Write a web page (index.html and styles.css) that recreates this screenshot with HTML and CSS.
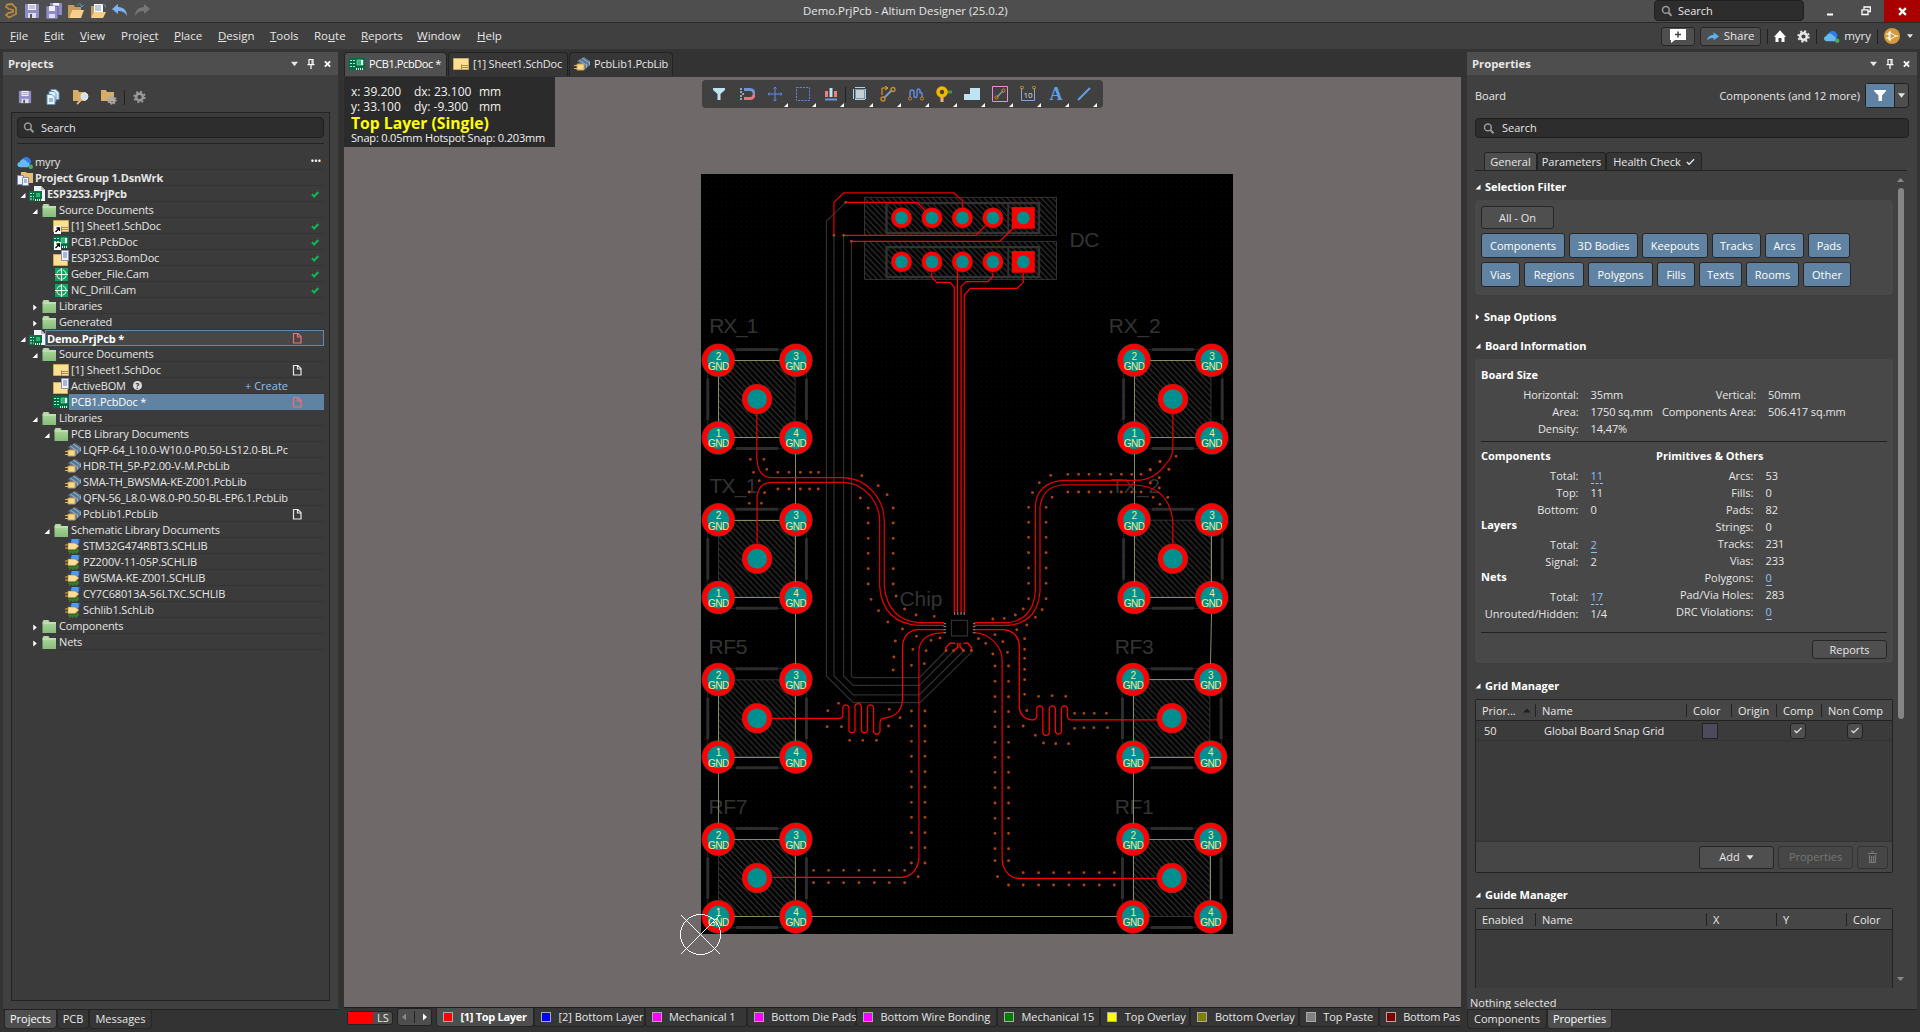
FILE: index.html
```html
<!DOCTYPE html>
<html lang="en">
<head>
<meta charset="utf-8">
<title>Demo.PrjPcb - Altium Designer (25.0.2)</title>
<link rel="stylesheet" href="styles.css">
</head>
<body>
<svg class="defs" width="0" height="0">
  <defs>
    <linearGradient id="gFolder" x1="0" y1="0" x2="0" y2="1"><stop offset="0" stop-color="#b5dba5"/><stop offset="1" stop-color="#84bb78"/></linearGradient>
    <pattern id="hatch" width="5.7" height="6" patternUnits="userSpaceOnUse"><path d="M-1 -1.05L6.7 7.05M-1 4.95L1 7.05M4.7 -1.05L6.7 1.05" stroke="#383838" stroke-width="1"/></pattern>
    <pattern id="dots" width="5" height="5" patternUnits="userSpaceOnUse"><rect x="1" y="1" width="1" height="1" fill="#0c0c0c"/></pattern>
    <symbol id="save" viewBox="0 0 16 16"><path d="M1 1h14v14H1z" fill="#8f8cc6"/><path d="M4 1h8v6H4z" fill="#efefff"/><path d="M5 3h6M5 5h6" stroke="#9a98b8"/><path d="M4 10h8v5H4z" fill="#dcdcf0"/><path d="M6 11h2v4H6z" fill="#555"/></symbol>
    <symbol id="saveall" viewBox="0 0 16 16"><path d="M4 0h12v12H4z" fill="#8f8cc6"/><path d="M7 0h6v3H7z" fill="#efefff"/><path d="M0 3h12v13H0z" fill="#8f8cc6" stroke="#454565" stroke-width=".6"/><path d="M3 3h6v5H3z" fill="#efefff"/><path d="M3 11h6v4H3z" fill="#dcdcf0"/></symbol>
    <symbol id="open" viewBox="0 0 16 16"><path d="M0 2h6l1 2h6v3H4L1 15H0z" fill="#c89d58"/><path d="M4 7h12l-3 8H1z" fill="#f4cf8c"/><path d="M9 3c1-3 5-3 5 0M12 2l2 2 2-2" stroke="#4a90b8" fill="none"/></symbol>
    <symbol id="opendoc" viewBox="0 0 16 16"><path d="M1 3h5v11H1z" fill="#c89d58"/><path d="M4 1h9v9H4z" fill="#fff"/><path d="M5 3h6M5 5h6M5 7h6" stroke="#7b93b5"/><path d="M4 9h12l-3 6H1z" fill="#f4cf8c"/><path d="M12 1l3 1 1 3" stroke="#4a90b8" fill="none"/></symbol>
    <symbol id="mag" viewBox="0 0 16 16"><circle cx="6.5" cy="6.5" r="4.500" fill="none" stroke="#9a9a9a" stroke-width="2"/><path d="M10 10l4 4.500" stroke="#9a9a9a" stroke-width="2.600"/></symbol>
    <symbol id="folder" viewBox="0 0 16 16"><path d="M1.500 4l1-2h5l1 2H15v11H1.500z" fill="url(#gFolder)"/><path d="M1.500 5h13.500" stroke="#d9f0cf" stroke-width=".8"/></symbol>
    <symbol id="sch" viewBox="0 0 16 16"><path d="M.5 2.500h15v11H.5z" fill="#fbdf94" stroke="#d2a75c"/><path d="M9 9.500h6M9 11.500h6M8.500 8.500v5" stroke="#a8894a" fill="none"/></symbol>
    <symbol id="pcb" viewBox="0 0 16 16"><path d="M0 2h16v12H0z" fill="#006d45"/><path d="M1 4.500h5M1 7.500h5M1 10.500h5" stroke="#a9e8c6" stroke-dasharray="2 1"/><path d="M8 4h6v5H8z" fill="#2bb673" stroke="#8fe0b7" stroke-width=".6"/><path d="M12 4h2v5h-2z" fill="#e8fff2"/><path d="M7 13h8" stroke="#d2f7e0" stroke-width="2" stroke-dasharray="1 1"/></symbol>
    <symbol id="link" viewBox="0 0 16 16"><path d="M1 8h7v8H1z" fill="#fff"/><path d="M2.500 14L6 10.500M3.500 10h3v3" stroke="#000" fill="none" stroke-width="1.300"/></symbol>
    <symbol id="prj" viewBox="0 0 16 16"><path d="M5 0h7l4 4v11H5z" fill="#f2f2f7"/><path d="M12 0v4h4" fill="#b5b5c5"/><path d="M0 5h13v10H0z" fill="#0a7045"/><path d="M1 7.500h4M1 10.500h4M1 13h4" stroke="#a9e8c6" stroke-dasharray="2 1"/><path d="M7 7h4v4H7z" fill="#2bb673"/><path d="M6 14h7" stroke="#d2f7e0" stroke-width="2" stroke-dasharray="1 1"/></symbol>
    <symbol id="bom" viewBox="0 0 16 16"><path d="M.5 4.500h14v11H.5z" fill="#fbdf94" stroke="#d2a75c"/><path d="M8.500.5h7v10h-7z" fill="#eef3ff" stroke="#8494b8"/><path d="M10 3h4M10 5h4M10 7h4" stroke="#6478a5"/></symbol>
    <symbol id="cam" viewBox="0 0 16 16"><path d="M2 2h13v13H2z" fill="#0fa35d"/><circle cx="8.500" cy="8.500" r="4.800" fill="none" stroke="#d5ffe6" stroke-dasharray="5.540 2" stroke-dashoffset="-1"/><path d="M8.500 2v13M2 8.500h13" stroke="#eafff2" stroke-width="1.200"/></symbol>
    <symbol id="group" viewBox="0 0 16 16"><path d="M4 2h5l1 1h6v10H4z" fill="#e8bd74"/><path d="M.5 5.500h6v9h-6z" fill="#eef3ff" stroke="#7b8caf"/><path d="M5.500 7.500h6v8h-6z" fill="#eef3ff" stroke="#7b8caf"/><path d="M7 10h3M7 12h3" stroke="#6478a5"/></symbol>
    <symbol id="cloud" viewBox="0 0 18 16"><path d="M5 11c-2-7 5-11 9-7 2 2 2 3 1.500 5l-2 3z" fill="#2f7be8"/><path d="M4 14c-4 0-5-5-1-6 1-4 7-4 8 0 4 0 4 6 0 6z" fill="#66baf2"/><circle cx="15.500" cy="13.300" r="2.500" fill="#45b35e"/></symbol>
    <symbol id="plib" viewBox="0 0 16 16"><path d="M3 5l7-4 6 4-7 5z" fill="#5b7590"/><path d="M5 4l6 4M8 2l6 4" stroke="#a8c4d8" stroke-width=".8"/><path d="M9 10l7-5v4l-6 5z" fill="#8fb0c8"/><path d="M11 9v4M14 7v4" stroke="#32485c"/><path d="M3 8h7v6H3z" fill="#f9d98a" stroke="#c79c4f"/><path d="M0 9.500h3M0 12.500h3" stroke="#d9ae5e"/></symbol>
    <symbol id="slib" viewBox="0 0 16 16"><path d="M4 11h9v3H4zM5 14v2M8 14v2M11 14v2" fill="#2d6b2b" stroke="#3b8a35"/><path d="M6 1h7l2 1-2 5H6z" fill="#4f9bf0"/><path d="M4 2h3M13 3h3" stroke="#1546a5"/><path d="M3 5h7l4 3-4 3.500H3z" fill="#ffdd93" stroke="#a37d3a" stroke-width=".6"/><path d="M0 7h3M0 10h3" stroke="#e0a94c"/></symbol>
    <symbol id="tick" viewBox="0 0 10 10"><path d="M2 5.200l2.200 2.300L8.300 3" stroke="#0fb552" stroke-width="2.200" fill="none"/></symbol>
    <symbol id="doc" viewBox="0 0 10 12"><path d="M1.500 1.500h4.500l3 3v6.500h-7.500zM5.500 1.500v3.500h3.500" fill="none" stroke="currentColor" stroke-width="1.200"/></symbol>
    <symbol id="dn" viewBox="0 0 8 8"><path d="M0 1.500h8l-4 5z" fill="currentColor"/></symbol>
    <symbol id="pin" viewBox="0 0 8 10"><path d="M2 .5v5h4v-5zM.5 5.700h7M4 6v4" stroke="#fff" stroke-width="1.200" fill="none"/><path d="M5 1v4" stroke="#fff"/></symbol>
    <symbol id="x" viewBox="0 0 8 8"><path d="M1 1l6 6M7 1l-6 6" stroke="#fff" stroke-width="2"/></symbol>
    <symbol id="exp" viewBox="0 0 6 6"><path d="M5.500 .5v5h-5z" fill="#fff"/></symbol>
    <symbol id="col" viewBox="0 0 6 8"><path d="M1 .5l4 3.500-4 3.500z" fill="#fff"/></symbol>
    <symbol id="gear" viewBox="0 0 16 16"><circle cx="8" cy="8" r="4.200" fill="none" stroke="currentColor" stroke-width="3.200"/><circle cx="8" cy="8" r="6.600" fill="none" stroke="currentColor" stroke-width="2" stroke-dasharray="2.600 2.580"/></symbol>
    <symbol id="chk" viewBox="0 0 10 8"><path d="M1 4l2.500 2.500L9 1" fill="none" stroke="#e8e8e8" stroke-width="1.500"/></symbol>
    <g id="gnd"><circle r="16.800" fill="#3c3c3c"/><circle r="16.200" fill="#f00"/><circle r="11" fill="#008f8f"/></g>
    <g id="sma">
      <path d="M-49.500 -49.700H49.500V49.700H-49.500z" fill="none" stroke="#222"/>
      <path d="M-21 -49.500H21M-21 49.500H21M-49.300 -20.500V21M49.300 -20.500V21" stroke="#2d2d2d" stroke-width="3" fill="none"/>
      <path d="M-38.500 -38.500H38V38.500H-38.500z" fill="url(#hatch)" stroke="#333"/>
      <circle r="15.300" fill="#3c3c3c"/><circle r="14.800" fill="#f00"/><circle r="9.900" fill="#008f8f"/>
      <use href="#gnd" x="-38.800" y="-38.800"/><use href="#gnd" x="38.800" y="-38.800"/><use href="#gnd" x="-38.800" y="38.800"/><use href="#gnd" x="38.800" y="38.800"/>
      <g class="padtext">
        <text x="-38.800" y="-39.500">2</text><text x="-38.800" y="-29.200">GND</text>
        <text x="38.800" y="-39.500">3</text><text x="38.800" y="-29.200">GND</text>
        <text x="-38.800" y="38.100">1</text><text x="-38.800" y="48.400">GND</text>
        <text x="38.800" y="38.100">4</text><text x="38.800" y="48.400">GND</text>
      </g>
    </g>
    <g id="hp"><circle r="10.600" fill="#4a2020"/><circle r="10.200" fill="#f00"/><circle r="6.400" fill="#008f8f"/></g>
    <g id="hs"><path d="M-11.500 -10.800h23v21.600h-23z" fill="#f00"/><circle r="6.400" fill="#008f8f"/></g>
    <g id="hdr">
      <path d="M864.500 -20.500H1056.500V17.500H864.500z" fill="url(#hatch)" stroke="#333"/>
      <path d="M886.500 -14.800H1039V15H886.500z" fill="none" stroke="#333" stroke-width="2.400"/><path d="M1008.200 -15V15" stroke="#333" stroke-width="1.800"/>
      <use href="#hp" x="901.500"/><use href="#hp" x="932"/><use href="#hp" x="962.400"/><use href="#hp" x="992.900"/><use href="#hs" x="1023.300"/>
    </g>
  </defs>
</svg>

<div class="app">
  <header class="titlebar">
    <div class="quick">
      <svg width="14" height="16" viewBox="0 0 14 16"><path d="M3 1.500l5-.5 4 4v6l-7 3.500L2 12l2-2 5-1V7L5 6 2 4z" fill="none" stroke="#b5893f" stroke-width="1.800"/></svg>
      <svg class="i"><use href="#save"/></svg><svg class="i"><use href="#saveall"/></svg><svg class="i"><use href="#open"/></svg><svg class="i"><use href="#opendoc"/></svg>
      <svg class="i" viewBox="0 0 16 16"><path d="M0 6l6-5v3c6 0 9 4 9 9-2-4-5-5-9-5v3z" fill="#7fb2f0"/></svg>
      <svg class="i" viewBox="0 0 16 16"><path d="M16 6l-6-5v3C4 4 1 8 1 13c2-4 5-5 9-5v3z" fill="#757575"/></svg>
    </div>
    <div class="apptitle">Demo.PrjPcb - Altium Designer (25.0.2)</div>
    <div class="topright">
      <div class="searchbox top"><svg width="12" height="12"><use href="#mag"/></svg><span>Search</span></div>
      <div class="wbtn"><svg width="8" height="10"><path d="M1 8.500h6" stroke="#fff" stroke-width="2"/></svg></div>
      <div class="wbtn"><svg width="10" height="10" viewBox="0 0 10 10"><path d="M3 3V1h6.300v4.500H7M1 3.800h6v4.700H1z" fill="none" stroke="#fff" stroke-width="1.300"/></svg></div>
      <div class="wbtn close"><svg width="9" height="9"><use href="#x" width="9" height="9"/></svg></div>
    </div>
  </header>
  <nav class="menubar">
    <div class="menus"><span style="width:34px"><u>F</u>ile</span><span style="width:36px"><u>E</u>dit</span><span style="width:41px"><u>V</u>iew</span><span style="width:53px">Proje<u>c</u>t</span><span style="width:44px"><u>P</u>lace</span><span style="width:52px"><u>D</u>esign</span><span style="width:44px"><u>T</u>ools</span><span style="width:47px">Ro<u>u</u>te</span><span style="width:56px"><u>R</u>eports</span><span style="width:60px"><u>W</u>indow</span><span><u>H</u>elp</span></div>
    <div class="account">
      <div class="btn cmt"><svg width="18" height="14" viewBox="0 0 18 14"><path d="M1 0h16v11H6l-4 3v-3H1z" fill="#fff"/><path d="M9 2.500v6M6 5.500h6" stroke="#444" stroke-width="1.500"/></svg></div>
      <div class="btn share"><svg width="12" height="9" viewBox="0 0 12 9"><path d="M0 8.500c1-4 3-5.500 6.500-5.500V.3L12 4.500 6.500 8.300V6C4 6 2 6.500 0 8.500z" fill="#5fb0f0"/></svg><span>Share</span></div>
      <i class="vs"></i>
      <svg width="12" height="12" viewBox="0 0 12 12"><path d="M6 .3L12 7h-1.500v5H7.500V8h-3v4h-3V7H0z" fill="#fff"/></svg>
      <svg class="sgear" width="13" height="13"><use href="#gear"/></svg>
      <i class="vs"></i>
      <svg class="cl" width="17" height="14"><use href="#cloud"/></svg><span class="user">myry</span>
      <i class="vs"></i>
      <svg width="16" height="16" viewBox="0 0 16 16"><circle cx="8" cy="8" r="8" fill="#d59a3a"/><path d="M5 4l7 4-7 4zM2 6h4M2 10h4M6 3v10M12 8h2" fill="none" stroke="#fff"/></svg>
      <svg class="dd" width="6" height="6"><use href="#dn"/></svg>
    </div>
  </nav>

  <main class="work">
    <aside class="left">
      <div class="phead"><b>Projects</b><span class="pctl"><svg width="7" height="8"><use href="#dn"/></svg><svg width="8" height="10"><use href="#pin"/></svg><svg width="7" height="8"><use href="#x"/></svg></span></div>
      <div class="ptools">
        <svg class="i"><use href="#save" x="1" y="1" width="14" height="14"/></svg>
        <svg class="i" viewBox="0 0 16 16"><path d="M6 .5h5l3 3v7H6z" fill="#dff0fa" stroke="#5f93b8"/><path d="M4 2.500h5l2 2v8H4z" fill="#dff0fa" stroke="#5f93b8"/><path d="M2 5.500h5l3 3v7H2z" fill="#e8f6ff" stroke="#5f93b8"/><path d="M4 10h4M4 12h4" stroke="#4a80a8"/></svg>
        <svg class="i" viewBox="0 0 16 16"><path d="M0 1h5l1 2h7v9H0z" fill="#d8ad6a"/><circle cx="11.500" cy="7.500" r="3.500" fill="#cfe4f0" stroke="#eee"/><path d="M9 10l-5 5" stroke="#e0b878" stroke-width="1.800"/></svg>
        <svg class="i" viewBox="0 0 16 16"><path d="M0 1h5l1 2h7v9H0z" fill="#d8ad6a"/><g style="color:#a9a9a9"><use href="#gear" x="6" y="6" width="10" height="10"/></g></svg>
        <i class="vs"></i>
        <svg class="grey" width="13" height="14"><use href="#gear"/></svg>
      </div>
      <div class="pbox">
        <div class="searchbox"><svg width="12" height="13"><use href="#mag"/></svg><span>Search</span></div>
        <div class="hr"></div>
        <div class="tree">
          <div class="row d0"><svg class="i"><use href="#cloud"/></svg><div class="t">myry<em class="dots">•••</em></div></div>
          <div class="row d0 b"><svg class="i"><use href="#group"/></svg><div class="t">Project Group 1.DsnWrk</div></div>
          <div class="row d1 b"><svg class="a"><use href="#exp"/></svg><svg class="i"><use href="#prj"/></svg><div class="t">ESP32S3.PrjPcb<svg class="ck"><use href="#tick"/></svg></div></div>
          <div class="row d2"><svg class="a"><use href="#exp"/></svg><svg class="i"><use href="#folder"/></svg><div class="t">Source Documents</div></div>
          <div class="row d3"><svg class="i"><use href="#sch"/><use href="#link"/></svg><div class="t">[1] Sheet1.SchDoc<svg class="ck"><use href="#tick"/></svg></div></div>
          <div class="row d3"><svg class="i"><use href="#pcb"/><use href="#link"/></svg><div class="t">PCB1.PcbDoc<svg class="ck"><use href="#tick"/></svg></div></div>
          <div class="row d3"><svg class="i"><use href="#bom"/></svg><div class="t">ESP32S3.BomDoc<svg class="ck"><use href="#tick"/></svg></div></div>
          <div class="row d3"><svg class="i"><use href="#cam"/></svg><div class="t">Geber_File.Cam<svg class="ck"><use href="#tick"/></svg></div></div>
          <div class="row d3"><svg class="i"><use href="#cam"/></svg><div class="t">NC_Drill.Cam<svg class="ck"><use href="#tick"/></svg></div></div>
          <div class="row d2"><svg class="a"><use href="#col"/></svg><svg class="i"><use href="#folder"/></svg><div class="t">Libraries</div></div>
          <div class="row d2"><svg class="a"><use href="#col"/></svg><svg class="i"><use href="#folder"/></svg><div class="t">Generated</div></div>
          <div class="row d1 b cur"><svg class="a"><use href="#exp"/></svg><svg class="i"><use href="#prj"/></svg><div class="t">Demo.PrjPcb *<svg class="dc red"><use href="#doc"/></svg></div></div>
          <div class="row d2"><svg class="a"><use href="#exp"/></svg><svg class="i"><use href="#folder"/></svg><div class="t">Source Documents</div></div>
          <div class="row d3"><svg class="i"><use href="#sch"/></svg><div class="t">[1] Sheet1.SchDoc<svg class="dc"><use href="#doc"/></svg></div></div>
          <div class="row d3"><svg class="i"><use href="#bom"/></svg><div class="t">ActiveBOM<span class="q">?</span><em class="create">+ Create</em></div></div>
          <div class="row d3 sel"><svg class="i"><use href="#pcb"/></svg><div class="t">PCB1.PcbDoc *<svg class="dc red"><use href="#doc"/></svg></div></div>
          <div class="row d2"><svg class="a"><use href="#exp"/></svg><svg class="i"><use href="#folder"/></svg><div class="t">Libraries</div></div>
          <div class="row d3"><svg class="a"><use href="#exp"/></svg><svg class="i"><use href="#folder"/></svg><div class="t">PCB Library Documents</div></div>
          <div class="row d4"><svg class="i"><use href="#plib"/></svg><div class="t">LQFP-64_L10.0-W10.0-P0.50-LS12.0-BL.Pc</div></div>
          <div class="row d4"><svg class="i"><use href="#plib"/></svg><div class="t">HDR-TH_5P-P2.00-V-M.PcbLib</div></div>
          <div class="row d4"><svg class="i"><use href="#plib"/></svg><div class="t">SMA-TH_BWSMA-KE-Z001.PcbLib</div></div>
          <div class="row d4"><svg class="i"><use href="#plib"/></svg><div class="t">QFN-56_L8.0-W8.0-P0.50-BL-EP6.1.PcbLib</div></div>
          <div class="row d4"><svg class="i"><use href="#plib"/></svg><div class="t">PcbLib1.PcbLib<svg class="dc"><use href="#doc"/></svg></div></div>
          <div class="row d3"><svg class="a"><use href="#exp"/></svg><svg class="i"><use href="#folder"/></svg><div class="t">Schematic Library Documents</div></div>
          <div class="row d4"><svg class="i"><use href="#slib"/></svg><div class="t">STM32G474RBT3.SCHLIB</div></div>
          <div class="row d4"><svg class="i"><use href="#slib"/></svg><div class="t">PZ200V-11-05P.SCHLIB</div></div>
          <div class="row d4"><svg class="i"><use href="#slib"/></svg><div class="t">BWSMA-KE-Z001.SCHLIB</div></div>
          <div class="row d4"><svg class="i"><use href="#slib"/></svg><div class="t">CY7C68013A-56LTXC.SCHLIB</div></div>
          <div class="row d4"><svg class="i"><use href="#slib"/></svg><div class="t">Schlib1.SchLib</div></div>
          <div class="row d2"><svg class="a"><use href="#col"/></svg><svg class="i"><use href="#folder"/></svg><div class="t">Components</div></div>
          <div class="row d2"><svg class="a"><use href="#col"/></svg><svg class="i"><use href="#folder"/></svg><div class="t">Nets</div></div>
        </div>
      </div>
      <div class="ptabs"><span class="on" style="width:53px">Projects</span><span style="width:32px">PCB</span><span style="width:63px">Messages</span></div>
    </aside>

    <section class="center">
      <div class="dtabs">
        <span class="on" style="width:103px"><svg class="i"><use href="#pcb"/></svg>PCB1.PcbDoc *</span>
        <span style="width:120px"><svg class="i"><use href="#sch"/></svg>[1] Sheet1.SchDoc</span>
        <span style="width:104px"><svg class="i"><use href="#plib"/></svg>PcbLib1.PcbLib</span>
      </div>
      <div class="canvas">
        <svg class="board" width="1117" height="930" viewBox="344 77 1117 930">
          <path d="M701 174H1233V934H701z" fill="#000"/><path d="M701 174H1233V934H701z" fill="url(#dots)"/>
          <g class="ref">
            <text x="709.300" y="333" textLength="49">RX_1</text><text x="1108.800" y="333" textLength="52">RX_2</text><text x="1069.400" y="247" textLength="30">DC</text>
            <text x="709.500" y="493" textLength="48">TX_1</text><text x="1111" y="493" textLength="49">TX_2</text><text x="899.500" y="606" textLength="43">Chip</text>
            <text x="708.500" y="654" textLength="39">RF5</text><text x="1114.700" y="654" textLength="39">RF3</text><text x="708.500" y="814" textLength="39">RF7</text><text x="1114.700" y="814" textLength="39">RF1</text>
          </g>
          <g transform="translate(690 170) scale(.35714 .33333)" class="trk dim"><path d="M436 97L382 154V870M403 196V870M430 196V870M452 214V870"/></g>
          <g transform="translate(690 460) scale(.35714 .33333)" class="trk dim"><path d="M382 0V648L457 728H644L788 577M403 0V648L457 705H642L766 573M430 0V648L457 676H642L738 573M452 0V648L457 653H642L716 573"/><path d="M732 481H777V528H732z"/></g>
          <use href="#hdr" y="217.900"/><use href="#hdr" y="261.900"/>
          <use href="#sma" x="757.100" y="399.100"/><use href="#sma" x="1172.900" y="399.100"/>
          <use href="#sma" x="757.100" y="558.700"/><use href="#sma" x="1172.900" y="558.700"/>
          <use href="#sma" x="757.100" y="718.300"/><use href="#sma" x="1171.800" y="718.300"/>
          <use href="#sma" x="757.100" y="878"/><use href="#sma" x="1171.800" y="878"/>
          <path class="rat" d="M734.500 360.500H779.500M734.500 437.500H779.500M718.500 376.500V421.500M795.500 454V504M734.500 520.500H779.500M795.500 536V582M734.500 597.500H779.500M795.500 614V664M718.500 696V741M795.500 696V741M734.500 757.500H779.500M718.500 773.500V823.500M734.500 839.500H779.500M795.500 856V900M734.500 916.500H779.500M811.500 916.500H1117M1149.500 839.500H1194.500M1133.500 856V900M1210.500 856V900M1133.500 823.500V773.500M1149.500 757.500H1194.500M1133.500 696V741M1149.500 679.500H1194.500M1210.500 664L1211.500 614M1211.500 582V536M1150.500 597.500H1195.500M1134.500 536V582M1134.500 504V454M1150.500 437.500H1195.500M1134.500 376.500V421.500M1150.500 360.500H1195.500"/>
          <g transform="translate(690 170) scale(.35714 .33333)" class="trk">
            <path class="dk" d="M403 196V97L430 69H739L763 93V115"/><path d="M436 97H635L660 123M430 196H800L828 166M452 214H867L905 174"/>
            <path d="M677 308V322L691 337H728L740 351V870M749 300V870M848 308V320L834 335H773L759 350V870M933 308V337L916 355H785L768 375V870"/>
            <path class="dk" d="M187 732V870M1352 732V830Q1352 862 1334 880"/>
          </g>
          <g transform="translate(690 460) scale(.35714 .33333)" class="trk">
            <path d="M740 0V460M749 0V460M759 0V460M768 0V460"/>
            <path class="dk" d="M188 0Q190 53 231 53H430C500 56 544 120 544 184V380Q555 480 640 488H712M188 254V110Q192 67 231 67H430C490 68 531 130 531 184V380Q540 490 640 496H712"/>
            <path class="dk" d="M1334 10Q1300 62 1246 61H1040Q968 72 967 141V395Q960 480 890 488H796M1352 252V184Q1342 80 1246 75H1040Q986 82 980 141V395Q972 490 890 496H796"/>
            <path d="M712 509H635Q598 515 595 560V720Q592 770 540 775Q532 777 532 790V812A9 9 0 0 1 514 815V742A9 11 0 0 0 497 742V812A9 9 0 0 1 480 812V742A9 11 0 0 0 462 742V812A9 9 0 0 1 445 812V742A9 11 0 0 0 428 742V765Q427 775 420 775H230"/>
            <path class="dk" d="M712 518Q645 520 641 570V720"/><path class="dk" d="M796 518C840 520 874 560 874 600V720"/>
            <path d="M796 509H880Q918 515 922 555V740Q925 778 960 780Q971 780 971 765V745A9 11 0 0 1 988 745V815A9 11 0 0 0 1006 815V745A9 11 0 0 1 1023 745V815A9 11 0 0 0 1040 815V745A9 11 0 0 1 1057 745V765Q1057 780 1065 780H1308"/>
            <path d="M717 572V562L728 550H742M738 572L750 562V548M766 572L756 560V548M788 572V562L778 550H766" class="w2"/>
            <path class="pads" d="M710 491H717M710 500H717M710 509H717M710 518H717M792 491H799M792 500H799M792 509H799M792 518H799M741 457V465M750 457V465M759 457V465M768 457V465"/>
          </g>
          <g transform="translate(690 700) scale(.35714 .33333)" class="trk">
            <path class="dk" d="M641 0V472M874 0V480"/><path d="M641 472C640 500 625 532 590 532H231M874 480C876 510 895 534 920 535H1308"/>
          </g>
          <g transform="translate(690 170) scale(.35714 .33333)" class="via"><path d="M436 97h0M403 196h0M430 196h0M452 214h0M169 868h0M207 868h0M215 898h0M1316 874h0M1361 859h0M1288 898h0M1341 898h0"/></g>
          <g transform="translate(690 460) scale(.35714 .33333)" class="via"><path d="M178 37h0M246 37h0M277 37h0M309 37h0M338 37h0M360 37h0M194 62h0M209 98h0M166 96h0M166 130h0M200 130h0M246 87h0M277 87h0M309 87h0M335 87h0M359 87h0M481 47h0M527 77h0M552 104h0M477 114h0M499 144h0M499 189h0M499 235h0M499 280h0M499 326h0M499 372h0M569 144h0M569 189h0M569 235h0M569 280h0M569 326h0M569 372h0M507 418h0M528 452h0M554 486h0M577 408h0M601 447h0M633 465h0M684 469h0M595 507h0M575 543h0M634 529h0M675 541h0M700 534h0M624 568h0M661 572h0M571 591h0M620 616h0M656 611h0M569 630h0M1010 46h0M978 68h0M959 98h0M1014 112h0M1058 43h0M1088 43h0M1117 43h0M1148 43h0M1179 43h0M1208 43h0M1237 43h0M1263 43h0M1289 30h0M1316 5h0M1341 28h0M1058 96h0M1088 96h0M1117 96h0M1148 96h0M1179 96h0M1208 96h0M1237 96h0M1263 96h0M1289 69h0M1314 53h0M1314 84h0M1297 112h0M1338 112h0M1316 133h0M948 142h0M948 187h0M948 232h0M948 278h0M948 324h0M948 370h0M948 416h0M997 142h0M997 187h0M997 232h0M997 278h0M997 324h0M997 370h0M997 416h0M933 447h0M986 449h0M911 465h0M967 472h0M880 475h0M848 477h0M943 495h0M915 509h0M854 524h0M808 536h0M828 550h0M876 545h0M937 536h0M937 568h0M889 577h0M848 582h0M937 595h0M937 628h0M937 659h0M937 703h0M854 618h0M892 618h0M854 664h0M892 664h0M854 710h0M892 710h0M717 572h0M738 572h0M766 572h0M788 572h0M386 752h0M416 730h0M384 800h0M424 800h0M447 841h0M484 841h0M522 841h0M558 748h0M588 773h0M556 798h0M976 709h0M1014 707h0M1052 709h0M943 752h0M933 798h0M967 826h0M990 849h0M1024 851h0M1060 851h0M1077 760h0M1103 760h0M1132 760h0M1166 760h0M1077 805h0M1103 803h0M1131 803h0M1169 803h0"/></g>
          <g transform="translate(690 700) scale(.35714 .33333)" class="via"><path d="M620 33h0M620 78h0M620 124h0M620 169h0M620 215h0M620 261h0M620 307h0M620 352h0M620 398h0M620 443h0M620 489h0M658 33h0M658 78h0M658 124h0M658 169h0M658 215h0M658 261h0M658 307h0M658 352h0M658 398h0M658 443h0M658 489h0M854 35h0M854 80h0M854 127h0M854 172h0M854 217h0M854 263h0M854 309h0M854 355h0M854 400h0M854 446h0M854 482h0M892 35h0M892 80h0M892 127h0M892 172h0M892 217h0M892 263h0M892 309h0M892 355h0M892 400h0M892 446h0M892 482h0M346 511h0M388 511h0M430 511h0M473 511h0M516 511h0M558 511h0M601 511h0M346 548h0M388 548h0M430 548h0M473 548h0M516 548h0M558 548h0M601 548h0M639 530h0M861 530h0M933 518h0M976 518h0M1018 518h0M1061 518h0M1103 518h0M1146 518h0M1188 518h0M892 555h0M933 555h0M976 555h0M1018 555h0M1061 555h0M1103 555h0M1146 555h0M1188 555h0"/></g>
          <g fill="none" stroke="#fff" shape-rendering="crispEdges"><circle cx="700.500" cy="934.500" r="20"/><path d="M681 915L720 954M681 954L720 915"/></g>
        </svg>
        <div class="hud">
          <div class="xy"><span>x: 39.200</span><span>dx: 23.100</span><span>mm</span></div>
          <div class="xy"><span>y: 33.100</span><span>dy: -9.300</span><span>mm</span></div>
          <div class="lay">Top Layer (Single)</div>
          <div class="snap">Snap: 0.05mm Hotspot Snap: 0.203mm</div>
        </div>
        <div class="abar">
          <span><svg class="i" viewBox="0 0 16 16"><path d="M2 2h12v2l-4.500 4v6h-3V8L2 4z" fill="#bfe3f2"/></svg></span>
          <span><svg class="i" viewBox="0 0 16 16"><path d="M5 3.500h6a4 4 0 0 1 4 4.500" fill="none" stroke="#6f96dc" stroke-width="3"/><path d="M5 12.500h6a4 4 0 0 0 4-4.500" fill="none" stroke="#e87878" stroke-width="3"/><path d="M1 3h2M1 6h2M1 10h2M1 13h2M3 8h2" stroke="#b5c5dc" stroke-width="1.500"/></svg></span>
          <span class="m"><svg class="i" viewBox="0 0 16 16"><path d="M8 1v14M1 8h14M6.500 2.500L8 1l1.500 1.500M6.500 13.500L8 15l1.500-1.500M2.500 6.500L1 8l1.500 1.500M13.500 6.500L15 8l-1.500 1.500" stroke="#5f8ae8" fill="none"/></svg></span>
          <span class="m"><svg class="i" viewBox="0 0 16 16"><path d="M1.500 1.500h13v13h-13z" stroke="#5f8ae8" stroke-dasharray="2 1.200" fill="none"/></svg></span>
          <span class="m"><svg class="i" viewBox="0 0 16 16"><path d="M2 5h3v6H2zM11 5h3v6h-3z" fill="#f08080"/><path d="M6.500 2h3v9h-3z" fill="#bfe3f2"/><path d="M2 13.500h12" stroke="#6f96dc" stroke-width="2"/></svg></span>
          <i class="vs"></i>
          <span class="m"><svg class="i" viewBox="0 0 16 16"><path d="M1 8h14" stroke="#b5d2de" stroke-width="10" stroke-dasharray="1 1"/><path d="M8 1v14" stroke="#b5d2de" stroke-width="10" stroke-dasharray="1 1"/><path d="M3.500 3.500h9v9h-9z" fill="#c9d0d4" stroke="#6f98ac"/></svg></span>
          <span class="m"><svg class="i" viewBox="0 0 16 16"><path d="M2 9V2h5M5 0l3 2-3 2" stroke="#f0a820" fill="none"/><path d="M4 12l8-8" stroke="#7f9cc0" stroke-width="2"/><circle cx="3" cy="13" r="2" fill="none" stroke="#c98a2a" stroke-width="1.400"/><circle cx="13" cy="3.500" r="2" fill="none" stroke="#c98a2a" stroke-width="1.400"/></svg></span>
          <span class="m"><svg class="i" viewBox="0 0 16 16"><path d="M2 11V6.500a2 2.500 0 0 1 4 0v3a1.500 2 0 0 0 3 0v-4a1.500 2.500 0 0 1 3 0v2a1 1.500 0 0 1 2 1V11" stroke="#5f8ad8" stroke-width="1.500" fill="none"/><circle cx="2" cy="12.500" r="1.600" fill="none" stroke="#c98a2a"/><circle cx="14" cy="12.500" r="1.600" fill="none" stroke="#c98a2a"/></svg></span>
          <span class="m"><svg class="i" viewBox="0 0 16 16"><path d="M6 9v7" stroke="#f0b070" stroke-width="3"/><path d="M10 6h6" stroke="#3f9a3a" stroke-width="3"/><circle cx="6" cy="6" r="4" fill="#444" stroke="#f5b800" stroke-width="3.500"/></svg></span>
          <span class="m"><svg class="i" viewBox="0 0 16 16"><path d="M0 8h6V2h10v12H0z" fill="#bfe3f2"/></svg></span>
          <span class="m"><svg class="i" viewBox="0 0 16 16"><path d="M.5.5h15v15H.5z" fill="none" stroke="#f08ad8"/><path d="M5 11l6-6" stroke="#7f9cc0" stroke-width="1.500"/><circle cx="4.500" cy="11.500" r="1.600" fill="none" stroke="#d0902a"/><circle cx="11.500" cy="4.500" r="1.600" fill="none" stroke="#d0902a"/></svg></span>
          <span class="m"><svg class="i" viewBox="0 0 16 16"><path d="M1.500 2v12.500h13V2" fill="none" stroke="#7fa8dc"/><circle cx="2" cy="1.500" r="1.500" fill="none" stroke="#d0902a"/><circle cx="14" cy="1.500" r="1.500" fill="none" stroke="#d0902a"/><text x="3.500" y="11.500" font-size="8" fill="#ddd">10</text></svg></span>
          <span class="m"><b class="A">A</b></span>
          <span class="m"><svg class="i" viewBox="0 0 16 16"><path d="M2 14L14 2" stroke="#5fa0e8" stroke-width="2"/></svg></span>
        </div>
      </div>
      <div class="layers">
        <div class="ls"><i></i><span>LS</span></div>
        <div class="nav"><svg width="6" height="8" viewBox="0 0 6 8"><path d="M5 .5v7L1 4z" fill="#888"/></svg><i></i><svg width="6" height="8"><use href="#col"/></svg></div>
        <div class="lt on" style="width:98px"><i style="background:#f00"></i>[1] Top Layer</div>
        <div class="lt" style="width:110.500px"><i style="background:#00f"></i>[2] Bottom Layer</div>
        <div class="lt" style="width:102.300px"><i style="background:#f0f"></i>Mechanical 1</div>
        <div class="lt" style="width:109.200px"><i style="background:#f0f"></i>Bottom Die Pads</div>
        <div class="lt" style="width:141px"><i style="background:#f0f"></i>Bottom Wire Bonding</div>
        <div class="lt" style="width:103.300px"><i style="background:#008000"></i>Mechanical 15</div>
        <div class="lt" style="width:90.200px"><i style="background:#ff0"></i>Top Overlay</div>
        <div class="lt" style="width:108.300px"><i style="background:#808000"></i>Bottom Overlay</div>
        <div class="lt" style="width:80px"><i style="background:#808080"></i>Top Paste</div>
        <div class="lt last"><i style="background:#800000"></i>Bottom Pas</div>
      </div>
    </section>

    <aside class="right">
      <div class="phead"><b>Properties</b><span class="pctl"><svg width="7" height="8"><use href="#dn"/></svg><svg width="8" height="10"><use href="#pin"/></svg><svg width="7" height="8"><use href="#x"/></svg></span></div>
      <div class="board-row"><span>Board</span><span class="sp"></span><span>Components (and 12 more)</span><div class="fbtn"><div class="f"><svg width="12" height="11" viewBox="0 0 12 11"><path d="M0 0h12v1L8 5.500V11H4.500V5.500L0 1z" fill="#fff"/></svg></div><div class="g"><svg width="7" height="7"><use href="#dn"/></svg></div></div></div>
      <div class="searchbox rs"><svg width="12" height="13"><use href="#mag"/></svg><span>Search</span></div>
      <div class="rtabs"><span class="on" style="width:53px">General</span><span style="width:69px">Parameters</span><span style="width:96px">Health Check <svg width="9" height="8"><use href="#chk"/></svg></span></div>
      <div class="scroll">
        <div class="cont">
          <h3><svg width="6" height="6"><use href="#exp"/></svg>Selection Filter</h3>
          <div class="card filt">
            <div class="btn all">All - On</div>
            <div class="chips"><span style="width:84px">Components</span><span style="width:69px">3D Bodies</span><span style="width:66px">Keepouts</span><span style="width:49px">Tracks</span><span style="width:39px">Arcs</span><span style="width:42px">Pads</span></div>
            <div class="chips"><span style="width:39px">Vias</span><span style="width:60px">Regions</span><span style="width:65px">Polygons</span><span style="width:38px">Fills</span><span style="width:43px">Texts</span><span style="width:53px">Rooms</span><span style="width:48px">Other</span></div>
          </div>
          <h3 class="h-snap"><svg width="5" height="8"><use href="#col"/></svg>Snap Options</h3>
          <h3 class="h-info"><svg width="6" height="6"><use href="#exp"/></svg>Board Information</h3>
          <div class="card info">
            <h4>Board Size</h4>
            <div class="kv4"><span>Horizontal:</span><b>35mm</b><span>Vertical:</span><b>50mm</b><span>Area:</span><b>1750 sq.mm</b><span>Components Area:</span><b>506.417 sq.mm</b><span>Density:</span><b>14,47%</b></div>
            <div class="line"></div>
            <div class="two">
              <div>
                <h4>Components</h4>
                <div class="kv"><span>Total:</span><b class="lk">11</b><span>Top:</span><b>11</b><span>Bottom:</span><b>0</b></div>
                <h4 class="h2">Layers</h4>
                <div class="kv k2"><span>Total:</span><b class="lk">2</b><span>Signal:</span><b>2</b></div>
                <h4 class="h2">Nets</h4>
                <div class="kv k2"><span>Total:</span><b class="lk">17</b><span>Unrouted/Hidden:</span><b>1/4</b></div>
              </div>
              <div>
                <h4>Primitives &amp; Others</h4>
                <div class="kv"><span>Arcs:</span><b>53</b><span>Fills:</span><b>0</b><span>Pads:</span><b>82</b><span>Strings:</span><b>0</b><span>Tracks:</span><b>231</b><span>Vias:</span><b>233</b><span>Polygons:</span><b class="lk">0</b><span>Pad/Via Holes:</span><b>283</b><span>DRC Violations:</span><b class="lk">0</b></div>
              </div>
            </div>
            <div class="line l2"></div>
            <div class="btn rep">Reports</div>
          </div>
          <h3 class="h-grid"><svg width="6" height="6"><use href="#exp"/></svg>Grid Manager</h3>
          <div class="tbl grid1">
            <div class="th"><span style="width:60px">Prior...<svg class="up" width="8" height="5"><path d="M0 4.500L4 .5l4 4z" fill="#1f1f1f"/></svg></span><span style="width:151px">Name</span><span style="width:45px">Color</span><span style="width:45px">Origin</span><span style="width:45px">Comp</span><span>Non Comp</span></div>
            <div class="td"><span style="width:60px">50</span><span style="width:151px">Global Board Snap Grid</span><span class="cc" style="width:45px"><i class="sw"></i></span><span style="width:45px"></span><span class="cc" style="width:41px"><i class="cb"><svg width="10" height="7"><use href="#chk"/></svg></i></span><span class="cc" style="width:73px"><i class="cb"><svg width="10" height="7"><use href="#chk"/></svg></i></span></div>
            <div class="tf"><div class="btn add">Add <svg width="8" height="7"><use href="#dn"/></svg></div><div class="btn off">Properties</div><div class="btn off bin"><svg width="9" height="12" viewBox="0 0 9 12"><path d="M0 2.500h9M3 1h3M1.500 4v7.500h6V4M3.500 5v6M5.500 5v6" fill="none" stroke="#777" stroke-width="1.200"/></svg></div></div>
          </div>
          <h3 class="h-guide"><svg width="6" height="6"><use href="#exp"/></svg>Guide Manager</h3>
          <div class="tbl grid2">
            <div class="th"><span style="width:60px">Enabled</span><span style="width:171px">Name</span><span style="width:70px">X</span><span style="width:70px">Y</span><span>Color</span></div>
          </div>
        </div>
        <div class="sbar"><svg width="7" height="4"><path d="M0 4l3.500-4L7 4z" fill="#888"/></svg><i></i><svg width="7" height="4"><path d="M0 0l3.500 4L7 0z" fill="#888"/></svg></div>
      </div>
      <div class="status">Nothing selected</div>
      <div class="ptabs"><span style="width:80px">Components</span><span class="on" style="width:65px">Properties</span></div>
    </aside>
  </main>
</div>
</body>
</html>
```
FILE: styles.css
```css
* { box-sizing: border-box; }
body { margin: 0; background: #333; color: #e6e6e6; font: 11px/16px "Open Sans", "Noto Sans", sans-serif; overflow: hidden; }
svg { display: block; flex: none; }
i, em { font-style: normal; }
.defs { position: absolute; }
.i { width: 16px; height: 16px; }
.app { width: 1920px; height: 1032px; display: flex; flex-direction: column; }

/* title bar and menu */
.titlebar { height: 23px; background: #4e4e4e; border-bottom: 1px solid #2b2b2b; display: grid; grid-template-columns: 803px auto 1fr; align-items: center; }
.quick { display: flex; gap: 6px; padding-left: 4px; align-items: center; }
.apptitle { font-size: 11.4px; }
.topright { display: flex; justify-content: flex-end; height: 22px; }
.searchbox { display: flex; align-items: center; gap: 6px; background: #2d2d2d; border: 1px solid #1f1f1f; border-radius: 4px; padding-left: 5px; }
.searchbox.top { width: 150px; height: 21px; margin-right: 8px; padding-left: 6px; gap: 5px; }
.wbtn { width: 36px; display: grid; place-items: center; }
.wbtn.close { background: #a80000; }
.menubar { height: 26px; background: #404040; display: flex; justify-content: space-between; align-items: center; }
.menus { display: flex; padding-left: 9px; font-size: 11.5px; }
.menus span { padding-left: 1px; }
.account { display: flex; align-items: center; padding-right: 7px; }
.btn { background: #4f4f4f; border: 1px solid #262626; border-radius: 3px; display: flex; align-items: center; justify-content: center; }
.cmt { width: 34px; height: 19px; margin-right: 5px; }
.share { width: 61px; height: 19px; gap: 5px; font-size: 11.5px; }
.vs { width: 1px; height: 15px; background: #202020; }
.account .vs { margin: 0 6px; }
.sgear { margin-left: 11px; }
.cl { margin-right: 4px; }
.user { font-size: 11.5px; }
.dd { margin-left: 7px; }

/* projects panel */
.work { flex: 1; display: flex; padding: 3px 3px 0; }
.phead { height: 23px; background: #4e4e4e; display: flex; justify-content: space-between; align-items: center; padding: 0 7px 0 5px; font-size: 11.3px; }
.pctl { display: flex; gap: 9px; align-items: center; }
.left { width: 335px; display: flex; flex-direction: column; }
.ptools { height: 37px; background: #404040; display: flex; align-items: center; gap: 12px; padding: 7px 0 0 14px; }
.ptools .vs { margin: 0 -4px 0 -5px; }
.grey { color: #999; }
.pbox { height: 889px; margin: 0 8px; border: 1px solid #232323; background: #3b3b3b; display: flex; flex-direction: column; padding: 4px 5px; box-shadow: -8px 0 #404040, 8px 0 #404040, 0 8px #404040, -8px 8px #404040, 8px 8px #404040; }
.pbox .searchbox { height: 21px; flex: none; }
.hr { height: 1px; background: #222; margin-top: 5px; }
.tree { margin: 10px 0 0 -5px; letter-spacing: -.15px; }
.row { height: 16px; display: flex; }
.row .i { margin-right: 2px; }
.row .a { width: 6px; height: 7px; margin: 6px 3px 0 1px; }
.row .t { flex: 1; border-bottom: 1px solid #333; display: flex; align-items: center; white-space: nowrap; line-height: 15px; }
.row .t svg, .row .t em { margin-left: auto; }
.d0 { padding-left: 5px; }
.d1 { padding-left: 7px; }
.d2 { padding-left: 19px; }
.d3 { padding-left: 41px; }
.d4 { padding-left: 53px; }
.d3:has(.a) { padding-left: 31px; }
.b { font-weight: 700; }
.ck { width: 10px; height: 10px; margin-right: 4px; }
.dc { width: 10px; height: 12px; margin-right: 22px; }
.red { color: #f07070; }
.dots { font-size: 10px; letter-spacing: -.3px; margin-right: 3px; color: #fff; }
.create { color: #8fc0f0; margin-right: 36px; letter-spacing: 0; }
.q { background: #ddd; color: #333; border-radius: 5px; width: 9px; height: 9px; margin-left: 7px; font: bold 8px/9px "Open Sans", sans-serif; text-align: center; }
.cur .t { border: 1px solid #6388ab; background: #474747; color: #fff; margin-left: -2px; padding-left: 1px; }
.cur .t .dc { margin-right: 21px; }
.sel .t { background: #6183a3; border-color: #6183a3; margin-left: -2px; padding-left: 2px; color: #fff; }
.ptabs { display: flex; height: 20px; flex: none; border-top: 1px solid #222; }
.left .ptabs { margin: 8px 0 0; padding-left: 1px; position: relative; }
.ptabs span { border: 1px solid #262626; border-top: 0; border-radius: 0 0 4px 4px; text-align: center; line-height: 17px; height: 19px; background: #363636; }
.ptabs .on { background: #4e4e4e; color: #fff; }

/* document area */
.center { width: 1117px; margin-left: 6px; display: flex; flex-direction: column; }
.dtabs { height: 25px; display: flex; letter-spacing: -.2px; }
.dtabs span { height: 24px; border: 1px solid #222; border-bottom: 0; border-radius: 4px 4px 0 0; display: flex; align-items: center; gap: 4px; padding: 0 0 2px 4px; white-space: nowrap; background: #363636; margin-right: 1px; }
.dtabs .on { background: #505050; color: #fff; letter-spacing: -.4px; }
.canvas { position: relative; height: 930px; background: #6f6a69; }
.hud { position: absolute; left: 0; top: 0; width: 211px; height: 70px; background: #2b2b2b; padding: 7px 0 0 7px; color: #f2f2f2; }
.xy { font-size: 12px; line-height: 15px; display: flex; }
.xy span:nth-child(1) { width: 63px; }
.xy span:nth-child(2) { width: 65px; }
.lay { color: #ff0; font: bold 15.7px/19px "Open Sans", sans-serif; white-space: nowrap; }
.snap { font-size: 11px; line-height: 10px; letter-spacing: -.18px; white-space: nowrap; }
.abar { position: absolute; left: 358px; top: 3px; width: 401px; height: 28px; background: #404040; border-radius: 4px; padding-left: 3px; display: flex; align-items: center; }
.abar span { width: 28px; height: 28px; display: grid; place-items: center; position: relative; }
.abar .m::after { content: ""; position: absolute; right: 1px; bottom: 1px; border: 2.500px solid; border-color: transparent #fff #fff transparent; }
.A { font: bold 18px/18px "Liberation Serif", serif; color: #5fa0e8; }
.ref { font: 21px "Liberation Sans", sans-serif; fill: #333; }
.padtext { font: 10px "Liberation Sans", sans-serif; fill: #f2ea94; text-anchor: middle; letter-spacing: -.5px; }
.trk path { fill: none; stroke: #f00; stroke-width: 1.25px; vector-effect: non-scaling-stroke; }
.trk .dk { stroke: #e00000; }
.trk.dim path { stroke: #2f2f2f; }
.trk .w2 { stroke-width: 1.5px; }
.trk .pads { stroke: #777; }
.via path { fill: none; stroke: #b04408; stroke-width: 2.9px; stroke-linecap: round; vector-effect: non-scaling-stroke; }
.rat { fill: none; stroke: #8b8b62; stroke-width: 1px; }

/* layer strip */
.layers { height: 25px; display: flex; align-items: flex-start; overflow: hidden; border-top: 1px solid #1f1f1f; letter-spacing: -.04px; }
.ls { width: 46px; height: 14px; margin: 3px 4px 0 3px; display: flex; border: 1px solid #222; border-radius: 3px; flex: none; background: #4e4e4e; line-height: 12px; }
.ls i { width: 25px; background: #f00; margin-right: 4px; flex: none; }
.nav { width: 35px; height: 18px; margin-right: 4px; border: 1px solid #222; border-radius: 3px; background: #4e4e4e; display: flex; align-items: center; justify-content: space-around; flex: none; }
.nav i { width: 1px; height: 12px; background: #222; }
.lt { height: 19px; flex: none; border: 1px solid #262626; border-top: 0; border-radius: 0 0 3px 3px; display: flex; align-items: center; gap: 7.5px; padding-left: 6px; background: #363636; white-space: nowrap; }
.lt i { width: 10px; height: 10px; border: 1px solid #aaa; flex: none; }
.lt.on { background: #4e4e4e; color: #fff; font-weight: 700; letter-spacing: -.3px; }
.lt.last { width: 82px; border-right: 0; letter-spacing: -.25px; }

/* properties panel */
.right { width: 450px; margin-left: 6px; display: flex; flex-direction: column; background: #404040; height: 977px; }
.right .phead, .board-row, .rs, .rtabs, .status { flex: none; }
.board-row { display: flex; align-items: center; height: 25px; margin: 8px 8px 0; }
.sp { flex: 1; }
.fbtn { width: 44px; height: 25px; margin-left: 5px; border: 1px solid #222; border-radius: 3px; display: flex; background: #4e4e4e; }
.fbtn .f { width: 29px; background: #6183a3; border-right: 1px solid #222; display: grid; place-items: center; }
.fbtn .g { flex: 1; display: grid; place-items: center; }
.rs { height: 20px; margin: 10px 8px 0; gap: 7px; padding-left: 7px; }
.rtabs { display: flex; margin: 14px 10px 0 8px; padding-left: 9px; border-bottom: 1px solid #222; height: 19px; }
.rtabs span { border: 1px solid #232323; border-bottom: 0; background: #363636; border-radius: 3px 3px 0 0; display: flex; gap: 5px; align-items: center; justify-content: center; white-space: nowrap; height: 18px; padding-top: 1px; }
.rtabs .on { background: #4e4e4e; }
.scroll { height: 817px; flex: none; display: flex; overflow: hidden; padding-left: 8px; }
.cont { width: 418px; }
h3 { margin: 0; font: bold 11px/16px "Open Sans", sans-serif; color: #fff; display: flex; align-items: center; gap: 4px; height: 16px; letter-spacing: -.05px; }
.cont h3:first-child { margin-top: 8px; }
.card { background: #484848; border-radius: 4px; margin-top: 5px; }
.filt { height: 95px; padding: 6px; }
.all { width: 73px; height: 23px; }
.chips { display: flex; gap: 4px; margin-top: 4px; }
.chips span { height: 25px; background: #6183a3; border: 1px solid #262626; border-radius: 3px; line-height: 23px; text-align: center; color: #fff; white-space: nowrap; }
.h-snap { margin-top: 14px; }
.h-info { margin-top: 13px; }
.info { height: 304px; padding: 8px 6px 0; }
h4 { margin: 0; font: bold 11px/16px "Open Sans", sans-serif; color: #fff; }
.kv4, .kv { display: grid; column-gap: 12px; grid-auto-rows: 17px; line-height: 17px; margin-top: 3px; white-space: nowrap; }
.kv { grid-template-columns: 97.5px 1fr; }
.kv4 { column-gap: 0; grid-template-columns: 97.5px 64.500px 113px 1fr; letter-spacing: -.08px; }
.kv4 b, .kv b { font-weight: 400; }
.kv4 b { padding-left: 12px; }
.kv4 span, .kv span { justify-self: end; }
.line { height: 1px; background: #222; margin-top: 4px; }
.two { display: grid; grid-template-columns: 175px 1fr; margin-top: 6px; height: 184px; }
.h2 { margin-top: -1px; }
.kv.k2 { margin-top: 3px; }
.kv .lk { color: #8fc0f0; justify-self: start; border-bottom: 1px dashed #8fc0f0; line-height: 15px; height: 16px; margin-top: 1px; }
.line.l2 { margin-top: 0; }
.rep { width: 75px; height: 19px; margin: 7px 0 0 auto; }
.h-grid { margin-top: 15px; }
.tbl { border: 1px solid #232323; background: #3b3b3b; margin-top: 5px; display: flex; flex-direction: column; border-radius: 2px; }
.grid1 { height: 174px; }
.th { height: 21px; background: #464646; border-bottom: 1px solid #222; display: flex; align-items: center; }
.th span { padding-left: 6px; border-right: 1px solid #222; height: 13px; line-height: 13px; display: flex; align-items: center; white-space: nowrap; }
.th span:last-child { border: 0; }
.up { margin-left: 7px; }
.td { height: 20px; display: flex; align-items: center; border-bottom: 1px solid #343434; }
.td span { padding-left: 8px; }
.td .cc { padding-left: 0; display: grid; place-items: center; }
.sw, .cb { width: 16px; height: 16px; border: 1px solid #222; background: #4d4a5c; }
.cb { background: #4e4e4e; border-radius: 3px; display: grid; place-items: center; }
.tf { margin-top: auto; height: 31px; background: #464646; border-top: 1px solid #333; display: flex; justify-content: flex-end; align-items: center; gap: 4px; padding-right: 4px; }
.tf .btn { height: 23px; width: 75px; gap: 6px; }
.tf .off { color: #777; background: #464646; border-color: #333; }
.tf .bin { width: 31px; }
.h-guide { margin-top: 14px; }
.grid2 { height: 100px; }
.sbar { width: 7px; margin-left: 4px; display: flex; flex-direction: column; align-items: center; padding: 7px 0; }
.sbar i { width: 6px; height: 531px; background: #858585; border-radius: 3px; margin: 6px 0 auto; }
.status { padding-left: 3px; margin-top: 7px; height: 14px; }
.right .ptabs { background: #333; }
```
